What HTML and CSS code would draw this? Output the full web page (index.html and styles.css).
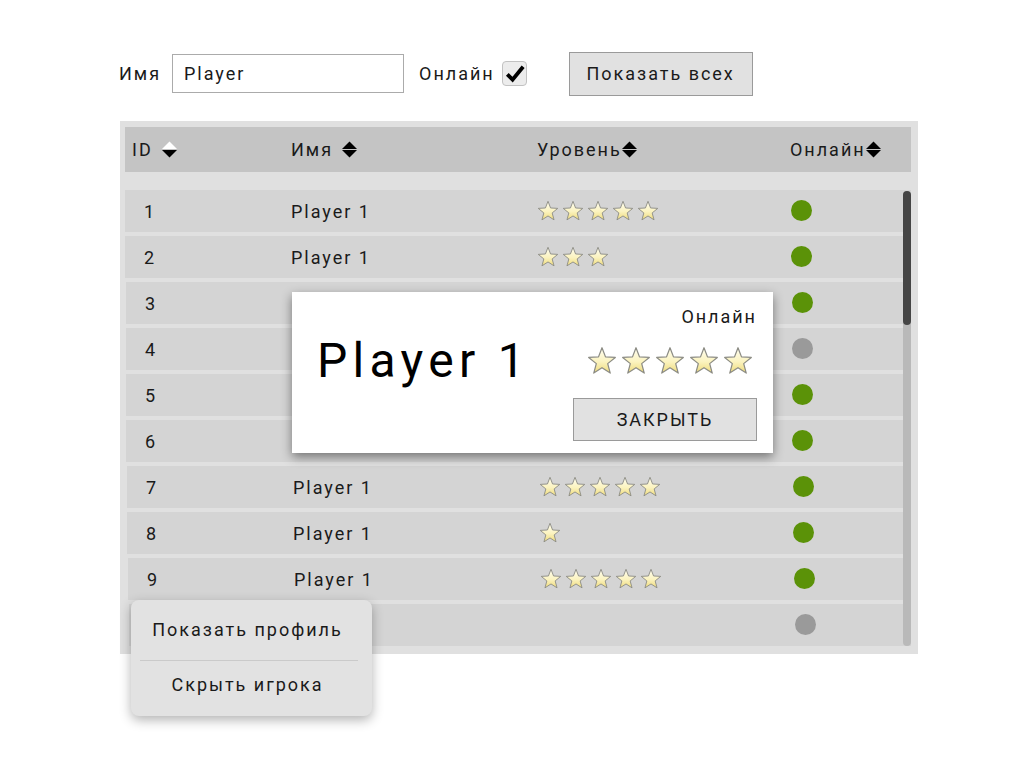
FILE: index.html
```html
<!DOCTYPE html>
<html lang="ru">
<head>
<meta charset="utf-8">
<title>Игроки</title>
<link rel="stylesheet" href="styles.css">
</head>
<body>
<svg class="defs" width="0" height="0" aria-hidden="true">
  <defs>
    <linearGradient id="starGrad" x1="0" y1="0" x2="0" y2="1">
      <stop offset="0" stop-color="#fffef2"/>
      <stop offset="0.55" stop-color="#fbf3bf"/>
      <stop offset="1" stop-color="#eedb7c"/>
    </linearGradient>
    <symbol id="star" viewBox="0 0 24 24">
      <polygon points="12,1.4 14.8,8.7 22.65,9.14 16.55,14.1 18.58,21.66 12,17.4 5.42,21.66 7.45,14.1 1.35,9.14 9.2,8.7" fill="url(#starGrad)" stroke="#8c8c84" stroke-width="1" stroke-linejoin="round"/>
    </symbol>
    <symbol id="sort" viewBox="0 0 15 17">
      <polygon points="0,8 7.5,0.5 15,8" fill="currentColor"/>
      <polygon points="0,9 7.5,16.5 15,9" fill="#000"/>
    </symbol>
  </defs>
</svg>

<div class="app">
  <div class="toolbar">
    <span class="lbl">Имя</span>
    <input class="name-input" type="text" value="Player">
    <span class="lbl online-lbl">Онлайн</span>
    <span class="checkbox">
      <svg viewBox="0 0 24 25" width="24" height="25"><path d="M4.5 13.5 L10 19 L21 5.5" fill="none" stroke="#000" stroke-width="4" stroke-linejoin="miter"/></svg>
    </span>
    <button class="btn show-all">Показать всех</button>
  </div>

  <div class="table">
    <div class="thead">
      <div class="th">ID <svg class="sort spaced active"><use href="#sort"/></svg></div>
      <div class="th">Имя <svg class="sort spaced"><use href="#sort"/></svg></div>
      <div class="th">Уровень<svg class="sort"><use href="#sort"/></svg></div>
      <div class="th">Онлайн<svg class="sort"><use href="#sort"/></svg></div>
    </div>
    <div class="tbody">
      <div class="row"><span>1</span><span>Player 1</span><span class="stars"><svg class="st"><use href="#star"/></svg><svg class="st"><use href="#star"/></svg><svg class="st"><use href="#star"/></svg><svg class="st"><use href="#star"/></svg><svg class="st"><use href="#star"/></svg></span><span class="dot on"></span></div>
      <div class="row"><span>2</span><span>Player 1</span><span class="stars"><svg class="st"><use href="#star"/></svg><svg class="st"><use href="#star"/></svg><svg class="st"><use href="#star"/></svg></span><span class="dot on"></span></div>
      <div class="row"><span>3</span><span>Player 1</span><span class="stars"><svg class="st"><use href="#star"/></svg><svg class="st"><use href="#star"/></svg><svg class="st"><use href="#star"/></svg></span><span class="dot on"></span></div>
      <div class="row"><span>4</span><span>Player 1</span><span class="stars"><svg class="st"><use href="#star"/></svg><svg class="st"><use href="#star"/></svg></span><span class="dot off"></span></div>
      <div class="row"><span>5</span><span>Player 1</span><span class="stars"><svg class="st"><use href="#star"/></svg><svg class="st"><use href="#star"/></svg><svg class="st"><use href="#star"/></svg><svg class="st"><use href="#star"/></svg></span><span class="dot on"></span></div>
      <div class="row"><span>6</span><span>Player 1</span><span class="stars"><svg class="st"><use href="#star"/></svg><svg class="st"><use href="#star"/></svg><svg class="st"><use href="#star"/></svg></span><span class="dot on"></span></div>
      <div class="row"><span>7</span><span>Player 1</span><span class="stars"><svg class="st"><use href="#star"/></svg><svg class="st"><use href="#star"/></svg><svg class="st"><use href="#star"/></svg><svg class="st"><use href="#star"/></svg><svg class="st"><use href="#star"/></svg></span><span class="dot on"></span></div>
      <div class="row"><span>8</span><span>Player 1</span><span class="stars"><svg class="st"><use href="#star"/></svg></span><span class="dot on"></span></div>
      <div class="row"><span>9</span><span>Player 1</span><span class="stars"><svg class="st"><use href="#star"/></svg><svg class="st"><use href="#star"/></svg><svg class="st"><use href="#star"/></svg><svg class="st"><use href="#star"/></svg><svg class="st"><use href="#star"/></svg></span><span class="dot on"></span></div>
      <div class="row"><span>10</span><span>Player 1</span><span class="stars"></span><span class="dot off"></span></div>
    </div>
    <div class="scrollbar"><div class="thumb"></div></div>
  </div>
</div>

<div class="modal">
  <div class="modal-status">Онлайн</div>
  <div class="modal-main">
    <div class="modal-name">Player 1</div>
    <div class="modal-stars">
      <svg class="mst"><use href="#star"/></svg><svg class="mst"><use href="#star"/></svg><svg class="mst"><use href="#star"/></svg><svg class="mst"><use href="#star"/></svg><svg class="mst"><use href="#star"/></svg>
    </div>
  </div>
  <div class="modal-actions">
    <button class="btn close-btn">ЗАКРЫТЬ</button>
  </div>
</div>

<div class="menu">
  <div class="menu-item">Показать профиль</div>
  <div class="menu-sep"></div>
  <div class="menu-item">Скрыть игрока</div>
</div>
</body>
</html>
```

FILE: styles.css
```css
* { box-sizing: border-box; }

html, body {
  margin: 0;
  padding: 0;
  background: #fff;
}

body {
  font-family: Roboto, "Noto Sans", "DejaVu Sans", sans-serif;
  font-size: 18px;
  letter-spacing: 0.11em;
  color: #1a1a1a;
}

.defs {
  position: absolute;
  width: 0;
  height: 0;
  overflow: hidden;
}

.app {
  padding: 52px 0 0 119px;
}

/* toolbar */
.toolbar {
  display: flex;
  align-items: center;
  height: 43px;
}

.name-input {
  margin-left: 11px;
  width: 232px;
  height: 39px;
  border: 1px solid #ababab;
  padding: 0 0 0 11px;
  font-family: inherit;
  font-size: 18px;
  letter-spacing: 0.11em;
  color: #1a1a1a;
  outline: none;
}

.online-lbl {
  margin-left: 15px;
}

.checkbox {
  margin-left: 7px;
  width: 25px;
  height: 25px;
  border: 1px solid #c2c2c2;
  border-radius: 4px;
  background: #ececec;
  display: flex;
  align-items: center;
  justify-content: center;
}

.checkbox svg {
  display: block;
}

.btn {
  font-family: inherit;
  font-size: 18px;
  letter-spacing: 0.11em;
  color: #1a1a1a;
  background: #e1e1e1;
  border: 1px solid #9a9a9a;
  border-radius: 0;
  padding: 0;
  cursor: pointer;
}

.show-all {
  margin-left: 42px;
  width: 184px;
  height: 44px;
}

/* table */
.table {
  position: relative;
  margin: 26px 0 0 1px;
  width: 798px;
  height: 533px;
  background: #e0e0e0;
  padding: 6px 7px 0 5px;
}

.thead {
  height: 45px;
  background: #c4c4c4;
  display: grid;
  grid-template-columns: 159px 246px 253px 1fr;
  align-items: center;
  padding-left: 7px;
}

.th {
  display: flex;
  align-items: center;
  white-space: pre;
}

.sort {
  width: 15px;
  height: 17px;
  color: #000;
  display: block;
}

.sort.spaced {
  margin-left: 3px;
}

.sort.active {
  color: #fff;
}

.tbody {
  margin-top: 18px;
  height: 458px;
  overflow: hidden;
  display: flex;
  flex-direction: column;
  gap: 4px;
}

.row {
  flex: none;
  height: 42px;
  background: #d4d4d4;
  display: grid;
  grid-template-columns: 147px 246px 254px 1fr;
  align-items: center;
  padding-left: 19px;
}

.row:nth-child(3), .row:nth-child(4), .row:nth-child(5), .row:nth-child(6) { transform: translateX(1px); }
.row:nth-child(7), .row:nth-child(8) { transform: translateX(2px); }
.row:nth-child(9) { transform: translateX(3px); }
.row:nth-child(10) { transform: translateX(4px); width: 790px; }

.stars {
  display: flex;
  gap: 3px;
}

.st {
  width: 22px;
  height: 22px;
  display: block;
}

.dot {
  width: 21px;
  height: 21px;
  border-radius: 50%;
  margin-top: -1px;
}

.dot.on { background: #5b9208; }
.dot.off { background: #9a9a9a; }

.scrollbar {
  position: absolute;
  left: 783px;
  top: 70px;
  width: 8px;
  height: 455px;
  border-radius: 4px;
  background: #b9b9b9;
}

.thumb {
  height: 134px;
  border-radius: 4px;
  background: #454545;
}

/* modal */
.modal {
  position: absolute;
  left: 292px;
  top: 292px;
  width: 481px;
  height: 161px;
  background: #fff;
  box-shadow: 0 4px 10px rgba(0, 0, 0, 0.45);
  padding: 14px 16px 12px 25px;
  display: flex;
  flex-direction: column;
}

.modal-status {
  align-self: flex-end;
  line-height: 22px;
}

.modal-main {
  display: flex;
  align-items: center;
  justify-content: space-between;
  margin-top: 8px;
  height: 50px;
}

.modal-name {
  font-size: 48px;
  letter-spacing: 0.11em;
  color: #000;
  line-height: 50px;
}

.modal-stars {
  display: flex;
  gap: 4px;
  margin-right: 4px;
}

.mst {
  width: 30px;
  height: 30px;
  display: block;
}

.modal-actions {
  margin-top: auto;
  display: flex;
  justify-content: flex-end;
}

.close-btn {
  width: 184px;
  height: 43px;
}

/* context menu */
.menu {
  position: absolute;
  left: 131px;
  top: 600px;
  width: 241px;
  height: 116px;
  background: #e2e2e2;
  border-radius: 8px;
  box-shadow: 0 4px 12px rgba(0, 0, 0, 0.3);
  padding: 6px 0;
}

.menu-item {
  height: 46px;
  padding-right: 8px;
  display: flex;
  align-items: center;
  justify-content: center;
}

.menu-sep {
  height: 1px;
  background: #cacaca;
  margin: 8px 14px 0 9px;
}
```
